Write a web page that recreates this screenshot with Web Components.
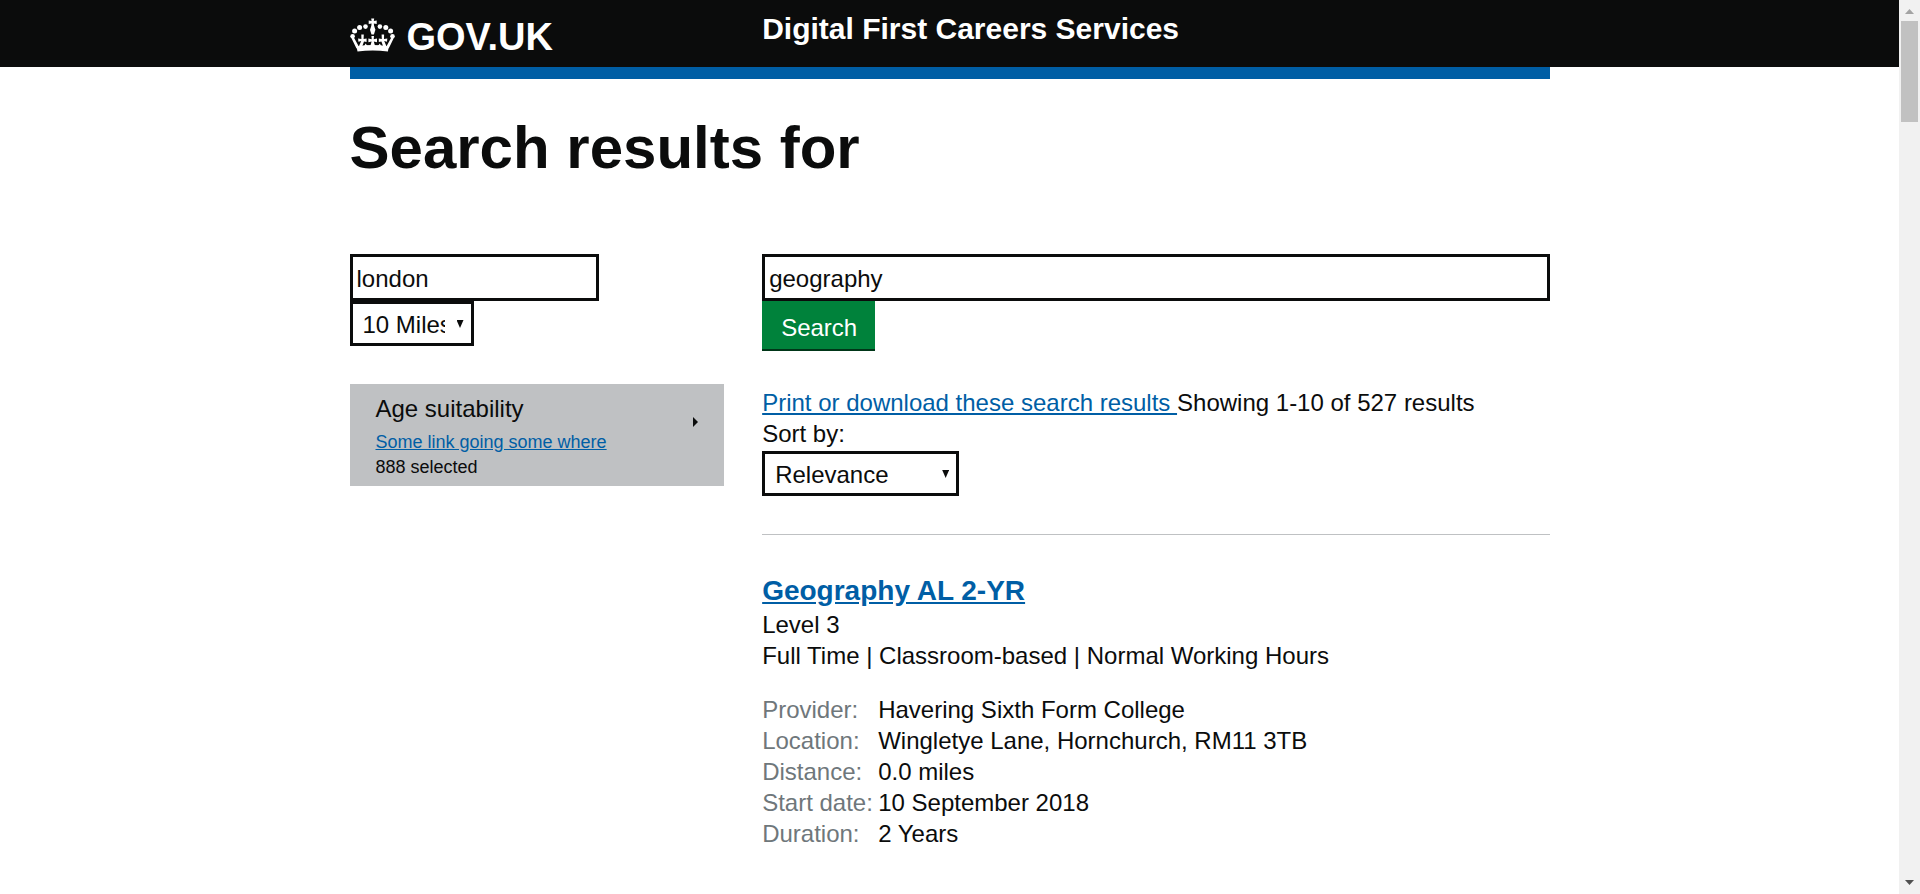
<!DOCTYPE html>
<html lang="en">
<head>
<meta charset="utf-8">
<meta name="viewport" content="width=device-width, initial-scale=1">
<title>Search results - Digital First Careers Services</title>
<style>
  body {
    margin: 0;
    background: #fff;
    color: #0b0c0c;
    font: 24px/31px Arial, "Liberation Sans", sans-serif;
  }
</style>
</head>
<body>
<page-shell>
  <site-header slot="header" service="Digital First Careers Services">GOV.UK</site-header>
  <page-title>Search results for</page-title>
  <course-search></course-search>
  <results-layout>
    <filter-panel slot="filters" heading="Age suitability" link="Some link going some where">888 selected</filter-panel>
    <results-summary></results-summary>
    <course-result heading="Geography AL 2-YR" provider="Havering Sixth Form College" location="Wingletye Lane, Hornchurch, RM11 3TB" distance="0.0 miles" start="10 September 2018" duration="2 Years">
      <span slot="level">Level 3</span>
      <span slot="mode">Full Time | Classroom-based | Normal Working Hours</span>
    </course-result>
  </results-layout>
</page-shell>

<script>
const define = (name, html, setup) => {
  const template = document.createElement('template');
  template.innerHTML = html;
  customElements.define(name, class extends HTMLElement {
    constructor() {
      super();
      this.attachShadow({ mode: 'open' }).append(template.content.cloneNode(true));
    }
    connectedCallback() {
      if (setup) setup(this, this.shadowRoot);
    }
  });
};

// Fills every [data-text] node from the host attribute of that name.
const fill = (host, root) => {
  root.querySelectorAll('[data-text]').forEach(node => {
    node.textContent = host.getAttribute(node.dataset.text);
  });
};

const columns = `
  display: grid;
  grid-template-columns: minmax(0, calc((100% + 38px) / 3 - 38px)) minmax(0, 1fr);
  column-gap: 38px;
`;

define('page-shell', `
  <style>
    :host { display: flex; min-height: 100vh; }
    .page { flex: 1; min-width: 0; }
    main { max-width: 1200px; margin: 0 auto; }
  </style>
  <div class="page">
    <slot name="header"></slot>
    <main><slot></slot></main>
  </div>
  <scroll-track></scroll-track>
`);

define('scroll-track', `
  <style>
    :host {
      display: flex; flex-direction: column; align-items: center;
      box-sizing: border-box; width: 21px; padding: 9px 0; background: #f1f1f1;
    }
    svg { display: block; flex: none; }
    .thumb { width: 17px; height: 101px; margin-top: 7px; background: #c1c1c1; }
    .space { flex: 1; }
  </style>
  <svg width="9" height="5" aria-hidden="true"><path d="M0 5L4.500 0L9 5Z" fill="#a3a3a3"/></svg>
  <div class="thumb"></div>
  <div class="space"></div>
  <svg width="9" height="5" aria-hidden="true"><path d="M0 0L4.500 5L9 0Z" fill="#505050"/></svg>
`);

define('site-header', `
  <style>
    :host { display: block; background: linear-gradient(#0b0c0c 67px, #fff 67px); color: #fff; }
    .inner { ${columns} max-width: 1200px; height: 67px; margin: 0 auto; border-bottom: 12px solid #005ea5; }
    a { color: inherit; text-decoration: none; font-weight: 700; }
    .logo { display: flex; gap: 12px; padding-top: 18px; font-size: 38px; line-height: 38px; }
    .service { padding-top: 10px; font-size: 30px; line-height: 37px; }
    svg { display: block; flex: none; }
  </style>
  <header class="inner">
    <a class="logo" href="#">
      <svg width="45" height="34" viewBox="0 0 45 34" fill="#fff" aria-hidden="true">
        <path d="M21.200.5h3l-.4 2.600 2.900-.5v3.400l-2.900-.5.4 3h-3l.4-3-2.900.5V2.600l2.900.5z"/>
        <path d="M21.300 8h2.800l1.300 3.800-1.500 4.700h-2.400L20 11.800z"/>
        <circle cx="15.500" cy="8.600" r="2.300"/><circle cx="9.600" cy="9.600" r="2.500"/><circle cx="4.600" cy="13" r="2.500"/><circle cx="2.600" cy="18.200" r="2.300"/>
        <circle cx="29.900" cy="8.600" r="2.300"/><circle cx="35.800" cy="9.600" r="2.500"/><circle cx="40.600" cy="13" r="2.500"/><circle cx="42.500" cy="18.200" r="2.300"/>
        <path d="M6.500 28.400Q22.700 25.600 38.800 28.400l-.9 5Q22.700 31.600 7.500 33.400z"/>
        <path d="M1.500 20.300l2.400-.8 5.200 9.500-2.600 1.500zM43.700 20.300l-2.400-.8-5.200 9.500 2.600 1.500z"/>
        <path id="cross" d="M21.400 18h2.600l-.3 3.200 3.300-.8v3.800l-3.200-.7 1.400 5h-5l1.400-5-3.200.7v-3.800l3.300.8z"/>
        <path d="M11.300 16.500h2.500l-.2 4.500 3-.6v3.500l-2.600-.5-1.800 5-3.600.5 2.600-6-2.800.8-.3-3.300 3.300.6zM34.100 16.500h-2.500l.2 4.500-3-.6v3.500l2.600-.5 1.800 5 3.600.5-2.600-6 2.800.8.3-3.300-3.300.6z"/>
        <path d="M15.500 25.500l2.500 3-4 .5zM29.900 25.500l-2.500 3 4 .5z"/>
      </svg>
      <slot></slot>
    </a>
    <a class="service" href="#" data-text="service"></a>
  </header>
`, fill);

define('page-title', `
  <style>
    :host { display: block; padding: 34px 0 72px; }
    h1 { margin: 0; font-size: 60px; line-height: 69px; }
  </style>
  <h1><slot></slot></h1>
`);

define('drop-down', `
  <style>
    :host { display: block; position: relative; width: var(--width, 197px); }
    :host::after {
      content: ""; position: absolute; right: 10px; top: 19px; width: 7px; height: 8px;
      background: #0b0c0c; clip-path: polygon(0 0, 100% 0, 50% 100%); pointer-events: none;
    }
    select {
      display: block; box-sizing: border-box; width: 100%; height: 45px; margin: 0;
      padding: 2px 26px 0 10px; border: 3px solid #0b0c0c; border-radius: 0;
      background: #fff; color: #0b0c0c; font: inherit; appearance: none;
      text-overflow: clip; overflow: hidden;
    }
  </style>
  <select></select>
`, (host, root) => {
  const select = root.querySelector('select');
  select.setAttribute('aria-label', host.getAttribute('label'));
  select.replaceChildren(...host.getAttribute('options').split(',').map(text => new Option(text)));
});

define('course-search', `
  <style>
    :host { display: block; }
    form { ${columns} align-items: start; margin: 0; }
    input {
      display: block; box-sizing: border-box; width: 100%; height: 47px; margin: 0;
      padding: 3px 4px 0; border: 3px solid #0b0c0c; border-radius: 0; background: #fff;
      color: #0b0c0c; font: inherit;
    }
    .place { max-width: 249px; }
    drop-down { --width: 124px; }
    button {
      display: block; height: 48px; margin: 0; padding: 4px 18px 0 19px; border: 0; border-radius: 0;
      background: #00823b; color: #fff; font: inherit; box-shadow: 0 2px 0 #003618;
    }
  </style>
  <form>
    <div>
      <input class="place" type="text" value="london" aria-label="Location">
      <drop-down label="Distance" options="10 Miles,20 Miles,50 Miles"></drop-down>
    </div>
    <div>
      <input type="text" value="geography" aria-label="Course name">
      <button type="button">Search</button>
    </div>
  </form>
`);

define('results-layout', `
  <style>
    :host { ${columns} align-items: start; padding-top: 35px; }
  </style>
  <div><slot name="filters"></slot></div>
  <div><slot></slot></div>
`);

define('filter-panel', `
  <style>
    :host {
      display: flex; align-items: flex-start; justify-content: space-between;
      padding: 8px 26px 6px; background: #bfc1c3;
    }
    h2 { margin: 0 0 5px; font-size: 24px; font-weight: 400; line-height: 33px; }
    .small { font-size: 18px; line-height: 25px; }
    a { color: #005ea5; }
    svg { display: block; flex: none; margin-top: 25px; }
  </style>
  <div>
    <h2 data-text="heading"></h2>
    <div class="small"><a href="#" data-text="link"></a></div>
    <div class="small"><slot></slot></div>
  </div>
  <svg width="5" height="10" aria-hidden="true"><path d="M0 0L5 5L0 10Z" fill="#0b0c0c"/></svg>
`, fill);

define('results-summary', `
  <style>
    :host { display: block; padding: 3px 0 38px; border-bottom: 1px solid #bfc1c3; }
    a { color: #005ea5; white-space: pre; }
    drop-down { margin-top: 2px; }
  </style>
  <div><a href="#">Print or download these search results </a>Showing 1-10 of 527 results</div>
  <div>Sort by:</div>
  <drop-down label="Sort by" options="Relevance,Distance,Start date"></drop-down>
`);

define('course-result', `
  <style>
    :host { display: block; padding: 37px 0 40px; }
    h2 { margin: 0; font-size: 28px; line-height: 37px; }
    a { color: #005ea5; }
    table { margin-top: 23px; border-collapse: collapse; }
    th, td { padding: 0; text-align: left; vertical-align: top; }
    th { width: 116px; color: #6f777b; font-weight: 400; white-space: nowrap; }
  </style>
  <h2><a href="#" data-text="heading"></a></h2>
  <div><slot name="level"></slot></div>
  <div><slot name="mode"></slot></div>
  <table>
    <tr><th scope="row">Provider:</th><td data-text="provider"></td></tr>
    <tr><th scope="row">Location:</th><td data-text="location"></td></tr>
    <tr><th scope="row">Distance:</th><td data-text="distance"></td></tr>
    <tr><th scope="row">Start date:</th><td data-text="start"></td></tr>
    <tr><th scope="row">Duration:</th><td data-text="duration"></td></tr>
  </table>
`, fill);
</script>
</body>
</html>
